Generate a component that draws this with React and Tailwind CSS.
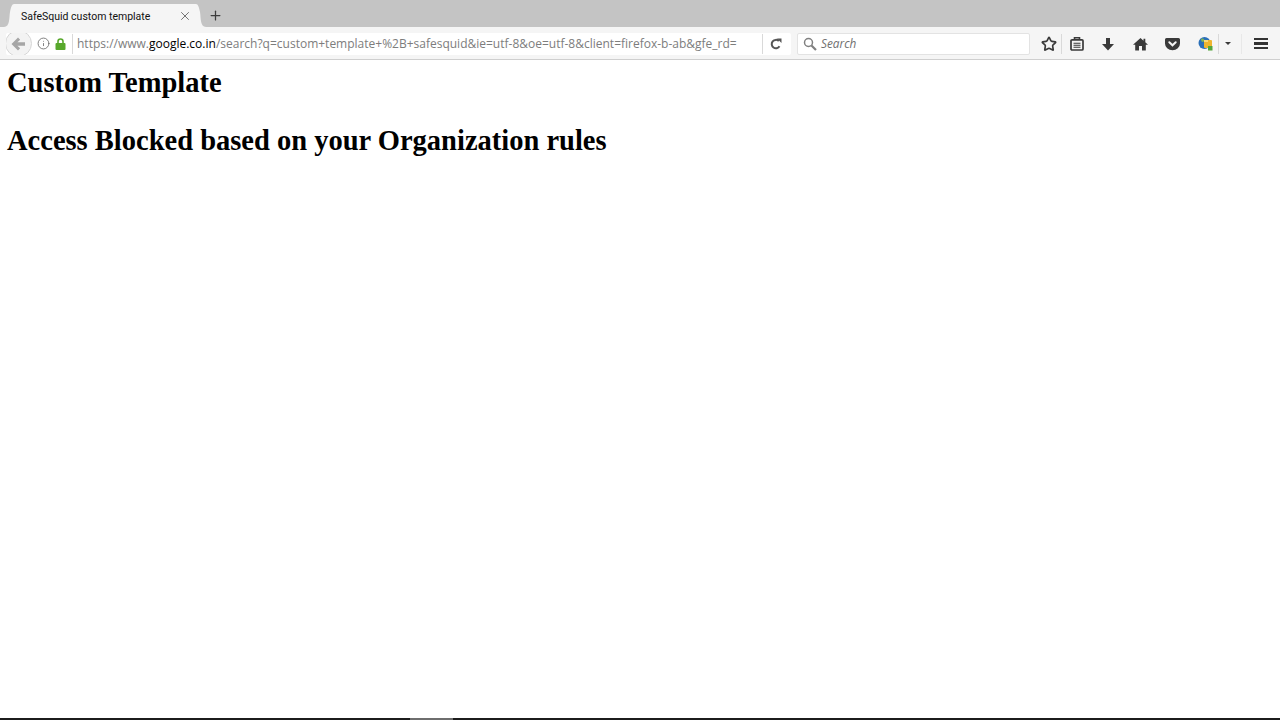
import React from "react";
import { X, Plus, Info, Star } from "lucide-react";

const Sep = ({ className = "" }) => <div className={`h-[20px] w-px shrink-0 bg-[#d9d9d9] ${className}`} />;

const BackArrow = () => (
  <svg width="15" height="14" viewBox="0 0 15 14" fill="#a6a6a6">
    <path d="M7 0.500 9.200 2.700 6.400 5.300H14V8.700H6.400L9.200 11.300 7 13.500 0.500 7z" />
  </svg>
);

const Padlock = () => (
  <svg width="11" height="12" viewBox="0 0 11 12" className="shrink-0">
    <path d="M3 5V3.500a2.500 2.500 0 0 1 5 0V5" fill="none" stroke="#58a82c" strokeWidth="1.600" />
    <rect x="0.500" y="5" width="10" height="7" rx="1" fill="#58a82c" />
  </svg>
);

const Reload = () => (
  <svg width="12" height="12" viewBox="0 0 12 12" fill="none">
    <path d="M9.500 8.300A4.200 4.200 0 1 1 8.800 3" stroke="#555" strokeWidth="2" />
    <path d="M7 0.500h4.500V5z" fill="#555" />
  </svg>
);

const Lens = () => (
  <svg width="14" height="14" viewBox="0 0 14 14" fill="none" stroke="#808080">
    <circle cx="5.500" cy="5.500" r="4" strokeWidth="1.500" />
    <path d="M8.500 8.500 13 13" strokeWidth="2.200" />
  </svg>
);

const Clipboard = () => (
  <svg width="14" height="14" viewBox="0 0 14 14" fill="none" stroke="#3a3a3a">
    <rect x="1" y="2.800" width="12" height="10.200" rx="1" strokeWidth="1.700" />
    <path d="M4.500 2V0.800h5V2" strokeWidth="1.600" />
    <path d="M3.500 6.200h7M3.500 8.200h7M3.500 10.200h7" strokeWidth="1.100" />
  </svg>
);

const DownArrow = () => (
  <svg width="14" height="14" viewBox="0 0 14 14" fill="#3a3a3a">
    <path d="M5 1h4v6h4L7 13.500 1 7h4z" />
  </svg>
);

const HomeIcon = () => (
  <svg width="15" height="14" viewBox="0 0 15 14" fill="#3a3a3a">
    <path d="M7.500 1 10.500 3.700V1.800H12.300V5.300L15 7.700H12.800V13.500H9V9H6V13.500H2.200V7.700H0z" />
  </svg>
);

const Pocket = () => (
  <svg width="15" height="14" viewBox="0 0 15 14">
    <path d="M1.500 1h12A1.500 1.500 0 0 1 15 2.500V6.500a7.500 6.800 0 0 1-15 0V2.500A1.500 1.500 0 0 1 1.500 1z" fill="#3a3a3a" />
    <path d="M4.300 5.300 7.500 8.300l3.200-3" fill="none" stroke="#f5f5f5" strokeWidth="2" strokeLinecap="round" />
  </svg>
);

const Addon = () => (
  <svg width="16" height="16" viewBox="0 0 16 16">
    <circle cx="6.500" cy="7" r="6" fill="#2a6fb8" />
    <path d="M3 3c2-1 4 0 3 2s-3 1-3-2z" fill="#7fb356" />
    <rect x="6" y="4" width="8" height="8" rx="1" fill="#eeb52e" />
    <path d="M6 4h4v2H6z" fill="#f7d77a" />
    <rect x="10" y="10" width="4.500" height="4.500" fill="#55a63a" />
  </svg>
);

const TabCurve = ({ className = "" }) => (
  <svg width="10" height="23" viewBox="0 0 10 23" className={`shrink-0 ${className}`}>
    <path d="M0 23C6 23 5 14 6 8 7 3 8 0 10 0V23z" fill="#f5f5f5" />
  </svg>
);

export default function App() {
  return (
    <div className="relative h-[720px] w-[1280px] overflow-hidden bg-white font-['Open_Sans',sans-serif]">
      <div className="flex h-[27px] items-end bg-[#c4c4c4] pl-[4px]">
        <TabCurve />
        <div className="flex h-[23px] w-[182px] items-center justify-between bg-[#f5f5f5] pl-[7px] pt-[2px]">
          <span className="font-['Roboto',sans-serif] text-[10.500px] text-[#111]">SafeSquid custom template</span>
          <X size={14} strokeWidth={1.300} color="#4a4a4a" className="-translate-x-[4px] -translate-y-px" />
        </div>
        <TabCurve className="-scale-x-100" />
        <div className="ml-[2px] flex h-[23px] items-center">
          <Plus size={15} strokeWidth={2} color="#3c3c3c" />
        </div>
      </div>

      <div className="flex h-[33px] items-center border-b border-[#cfcfcf] bg-[#f5f5f5] pl-[6px] pt-px">
        <div className="flex h-[22px] w-[756px] items-center overflow-hidden rounded-l-[2px] bg-white">
          <div className="-ml-px flex h-[27px] w-[27px] shrink-0 items-center justify-center rounded-full border border-[#d6d6d6] bg-[#f3f3f3]">
            <BackArrow />
          </div>
          <Info size={13} strokeWidth={1.500} color="#666" className="ml-[5px] shrink-0" />
          <div className="ml-[5px]"><Padlock /></div>
          <Sep className="ml-[6px]" />
          <div className="ml-[4px] whitespace-nowrap text-[12px] text-[#7d7d7d]">
            https://www.<span className="text-black">google.co.in</span>/search?q=custom+template+%2B+safesquid&amp;ie=utf-8&amp;oe=utf-8&amp;client=firefox-b-ab&amp;gfe_rd=
          </div>
        </div>
        <div className="flex h-[22px] w-[29px] items-center rounded-r-[2px] bg-white">
          <Sep />
          <div className="ml-[7px]"><Reload /></div>
        </div>
        <div className="ml-[6px] flex h-[22px] w-[233px] shrink-0 items-center rounded-[2px] border border-[#e3e3e3] bg-white pl-[5px]">
          <Lens />
          <span className="ml-[4px] text-[11.800px] italic text-[#707070]">Search</span>
        </div>
        <div className="ml-[11px] flex items-center">
          <Star size={16} strokeWidth={2.500} color="#3a3a3a" />
          <Sep className="ml-[4px]" />
          <div className="ml-[8px]"><Clipboard /></div>
          <div className="ml-[17px]"><DownArrow /></div>
          <div className="ml-[18px]"><HomeIcon /></div>
          <div className="ml-[17px]"><Pocket /></div>
          <div className="ml-[18px]"><Addon /></div>
          <Sep className="ml-[4px]" />
          <div className="ml-[6px] h-0 w-0 border-x-[3px] border-t-[3px] border-x-transparent border-t-[#3a3a3a]" />
          <Sep className="ml-[10px] bg-[#e8e8e8]" />
          <div className="ml-[12px] flex w-[14px] flex-col gap-[2px]">
            <div className="h-[2.500px] bg-[#333]" />
            <div className="h-[2.500px] bg-[#333]" />
            <div className="h-[2.500px] bg-[#333]" />
          </div>
        </div>
      </div>

      <div className="px-[7px] font-['Liberation_Serif',serif] text-[28.500px] font-bold leading-[31px] text-black">
        <h1 className="mt-[7px]">Custom Template</h1>
        <h1 className="mt-[27px]">Access Blocked based on your Organization rules</h1>
      </div>

      <div className="absolute bottom-0 left-0 h-[2px] w-full bg-[#1c1c1c]" />
      <div className="absolute bottom-0 left-[410px] h-[2px] w-[43px] bg-[#6e6e6e]" />
    </div>
  );
}
